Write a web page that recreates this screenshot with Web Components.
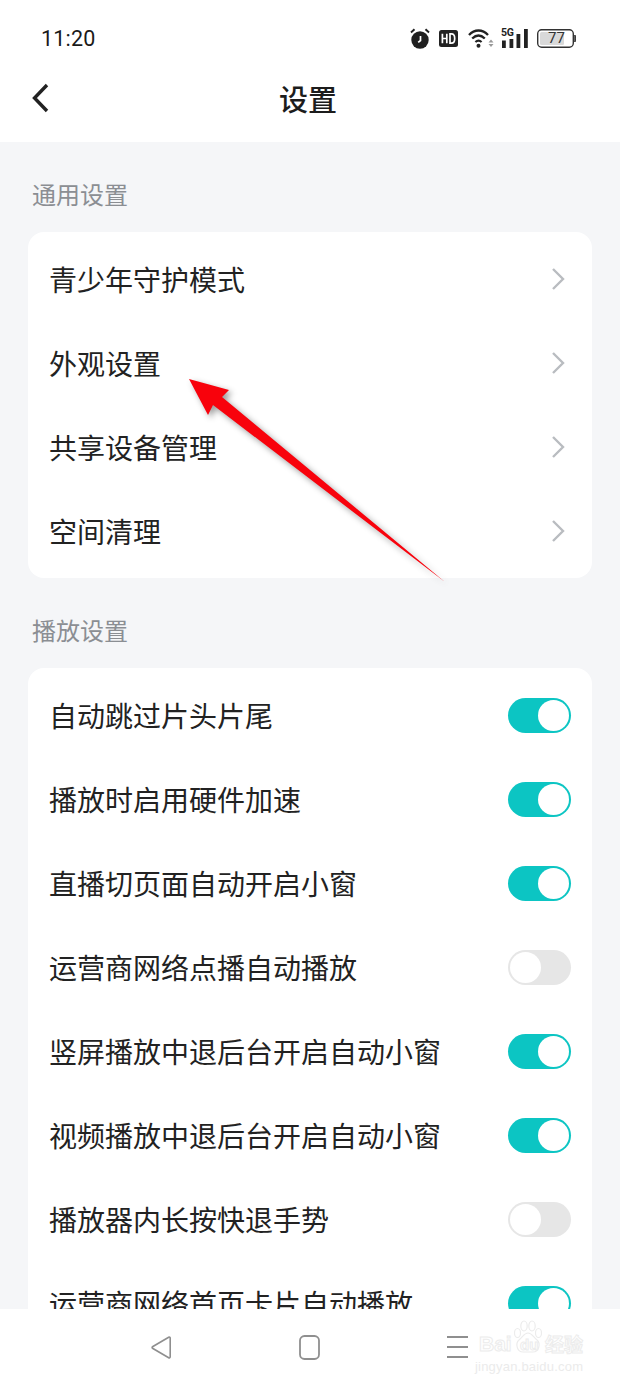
<!DOCTYPE html>
<html lang="zh">
<head>
<meta charset="utf-8">
<title>设置</title>
<style>
  html, body { margin: 0; padding: 0; }
  body {
    width: 620px;
    height: 1386px;
    overflow: hidden;
    background: #f5f6f8;
    color: #222;
    font-family: "Noto Sans CJK SC", "Noto Sans", sans-serif;
  }
</style>
</head>
<body>
<settings-screen>
  <status-bar slot="top"></status-bar>
  <title-bar slot="top">设置</title-bar>

  <setting-group label="通用设置">
    <setting-row>青少年守护模式</setting-row>
    <setting-row>外观设置</setting-row>
    <setting-row>共享设备管理</setting-row>
    <setting-row>空间清理</setting-row>
  </setting-group>

  <setting-group label="播放设置">
    <setting-row toggle="on">自动跳过片头片尾</setting-row>
    <setting-row toggle="on">播放时启用硬件加速</setting-row>
    <setting-row toggle="on">直播切页面自动开启小窗</setting-row>
    <setting-row toggle="off">运营商网络点播自动播放</setting-row>
    <setting-row toggle="on">竖屏播放中退后台开启自动小窗</setting-row>
    <setting-row toggle="on">视频播放中退后台开启自动小窗</setting-row>
    <setting-row toggle="off">播放器内长按快退手势</setting-row>
    <setting-row toggle="on">运营商网络首页卡片自动播放</setting-row>
  </setting-group>

  <nav-bar slot="bottom"></nav-bar>
  <callout-arrow slot="over"></callout-arrow>
  <baidu-mark slot="over"></baidu-mark>
</settings-screen>

<script>
class SettingsScreen extends HTMLElement {
  constructor() {
    super();
    this.attachShadow({ mode: 'open' });
    this.shadowRoot.innerHTML = `
      <style>
        :host { display: flex; flex-direction: column; position: relative; width: 620px; height: 1386px; overflow: hidden; }
        .top { background: #fff; flex: none; }
        .body { flex: 1; min-height: 0; overflow: hidden; padding: 0 28px; }
      </style>
      <div class="top"><slot name="top"></slot></div>
      <div class="body"><slot></slot></div>
      <slot name="bottom"></slot>
      <slot name="over"></slot>
    `;
  }
}

class StatusBar extends HTMLElement {
  constructor() {
    super();
    this.attachShadow({ mode: 'open' });
    this.shadowRoot.innerHTML = `
      <style>
        :host { display: flex; align-items: center; justify-content: space-between; height: 58px; padding: 18px 44px 0 41px; box-sizing: border-box; color: #1a1a1a; }
        .time { font: 400 21.500px/1 Roboto, "Liberation Sans", sans-serif; letter-spacing: .2px; position: relative; top: 1px; }
        .icons { display: flex; align-items: center; }
        svg { display: block; }
        .signal { position: relative; width: 27px; height: 19px; margin-left: 7px; }
        .signal span { position: absolute; left: 0; top: -1px; font: 700 10.500px/10px Roboto, sans-serif; letter-spacing: -.2px; color: #222; }
        .batt { position: relative; width: 39px; height: 19px; margin-left: 9px; }
        .batt b { position: absolute; left: 0; top: 0; width: 36px; height: 19px; font: 400 15px/19px Roboto, sans-serif; text-align: center; padding-left: 3px; box-sizing: border-box; color: #333; }
      </style>
      <span class="time">11:20</span>
      <div class="icons">
        <svg width="20" height="21" viewBox="0 0 20 21">
          <circle cx="10" cy="12" r="8.700" fill="#1f1f1f"/>
          <path d="M1 4.500 4.500 1.200M19 4.500 15.500 1.200" stroke="#1f1f1f" stroke-width="1.900" fill="none"/>
          <path d="M10.500 8v4.500l-2.300 1.800" stroke="#fff" stroke-width="1.700" fill="none"/>
        </svg>
        <svg style="margin-left:9px" width="19" height="17" viewBox="0 0 19 17">
          <rect width="19" height="17" rx="2.500" fill="#222"/>
          <path d="M3.400 3.800v9.400M7.800 3.800v9.400M3.400 8.500h4.400" stroke="#fff" stroke-width="1.700" fill="none"/>
          <path d="M11 3.800v9.400h1.400c2.300 0 3.300-1.900 3.300-4.700s-1-4.700-3.300-4.700z" stroke="#fff" stroke-width="1.700" fill="none"/>
        </svg>
        <svg style="margin-left:10px" width="26" height="20" viewBox="0 0 26 20">
          <path d="M1 7C6.500 1 14.500 1 20 7M4.200 10.500c4-3.900 8.600-3.900 12.600 0M7.400 14c2.100-1.800 4.100-1.800 6.200 0" stroke="#222" stroke-width="2.300" fill="none"/>
          <circle cx="10.500" cy="17.800" r="2" fill="#222"/>
          <path d="M23 11.500l2.500 3h-5zM20.500 16h5L23 19z" fill="#999"/>
        </svg>
        <div class="signal">
          <svg width="27" height="19" viewBox="0 0 27 19">
            <rect x="1" y="11.500" width="3.800" height="7.500" fill="#222"/>
            <rect x="8.500" y="10" width="3.800" height="9" fill="#222"/>
            <rect x="15.500" y="5" width="3.800" height="14" fill="#222"/>
            <rect x="23" y="0" width="3.800" height="19" fill="#222"/>
          </svg>
          <span>5G</span>
        </div>
        <div class="batt">
          <svg width="39" height="19" viewBox="0 0 39 19">
            <rect x=".7" y=".7" width="35.600" height="17.600" rx="4" fill="#fff" stroke="#333" stroke-width="1.400"/>
            <rect x="3" y="3" width="24" height="13" rx="1.500" fill="#d9d9d9"/>
            <path d="M37.800 6c1.200.4 1.200 6.600 0 7z" fill="#333" stroke="#333"/>
          </svg>
          <b>77</b>
        </div>
      </div>
    `;
  }
}

class TitleBar extends HTMLElement {
  constructor() {
    super();
    this.attachShadow({ mode: 'open' });
    this.shadowRoot.innerHTML = `
      <style>
        :host { display: flex; align-items: center; justify-content: center; position: relative; height: 84px; padding: 0 4px 4px 0; box-sizing: border-box; font-size: 29px; font-weight: 500; color: #1c1c1c; }
        svg { position: absolute; left: 31px; top: 24px; }
      </style>
      <svg width="18" height="32" viewBox="0 0 18 32"><path d="M16 3 3.500 16 16 29" fill="none" stroke="#222" stroke-width="3.400"/></svg>
      <slot></slot>
    `;
  }
}

class SettingGroup extends HTMLElement {
  constructor() {
    super();
    this.attachShadow({ mode: 'open' });
    this.shadowRoot.innerHTML = `
      <style>
        :host { display: block; }
        .label { height: 90px; box-sizing: border-box; padding: 34px 4px 0; font-size: 24px; line-height: 36px; color: #8b8e93; }
        .card { background: #fff; border-radius: 16px; padding: 6px 0 4px; }
      </style>
      <div class="label"></div>
      <div class="card"><slot></slot></div>
    `;
    this.shadowRoot.querySelector('.label').textContent = this.getAttribute('label');
  }
}

class SettingRow extends HTMLElement {
  constructor() {
    super();
    this.attachShadow({ mode: 'open' });
  }

  connectedCallback() {
    const toggle = this.getAttribute('toggle');
    let control = `<svg class="chevron" width="14" height="24" viewBox="0 0 14 24"><path d="M2 2l10 10L2 22" fill="none" stroke="#b9bcc0" stroke-width="2.400"/></svg>`;
    if (toggle) {
      control = `<span class="switch ${toggle}"><i></i></span>`;
    }
    this.shadowRoot.innerHTML = `
      <style>
        :host { display: flex; align-items: center; justify-content: space-between; height: 84px; padding: 0 21px 0 22px; font-size: 28px; color: #222; white-space: nowrap; }
        .text { position: relative; top: -1px; left: -1px; }
        .chevron { display: block; margin-right: 6px; margin-top: -2px; }
        .switch { display: flex; box-sizing: border-box; width: 63px; height: 35px; border-radius: 18px; padding: 2px; margin-top: -1px; }
        .switch i { display: block; width: 31px; height: 31px; border-radius: 50%; background: #fff; }
        .on { background: #0cc5c3; justify-content: flex-end; }
        .off { background: #e6e6e6; }
      </style>
      <span class="text"><slot></slot></span>
      ${control}
    `;
  }
}

class NavBar extends HTMLElement {
  constructor() {
    super();
    this.attachShadow({ mode: 'open' });
    this.shadowRoot.innerHTML = `
      <style>
        :host { display: block; flex: none; height: 77px; background: #fff; position: relative; z-index: 1; }
        .row { display: grid; grid-template-columns: 148px 148px 21px; align-items: center; height: 76px; padding-left: 151px; box-sizing: border-box; }
        svg { display: block; }
      </style>
      <div class="row">
        <svg width="20" height="23" viewBox="0 0 20 23"><path d="M19.200 2v19a1 1 0 0 1-1.500.8L1.500 12.300a1 1 0 0 1 0-1.600L17.700 1.200a1 1 0 0 1 1.500.8z" fill="none" stroke="#8f8f8f" stroke-width="1.600"/></svg>
        <svg width="21" height="25" viewBox="0 0 21 25"><rect x="1" y="1" width="19" height="23" rx="4.500" fill="none" stroke="#8f8f8f" stroke-width="1.800"/></svg>
        <svg width="21" height="24" viewBox="0 0 21 24"><path d="M0 2h21M0 12h21M0 22h21" stroke="#8f8f8f" stroke-width="1.800"/></svg>
      </div>
    `;
  }
}

class CalloutArrow extends HTMLElement {
  constructor() {
    super();
    this.attachShadow({ mode: 'open' });
    this.shadowRoot.innerHTML = `
      <style>
        :host { position: absolute; left: 180px; top: 370px; width: 280px; height: 225px; z-index: 2; pointer-events: none; }
        svg { display: block; overflow: visible; filter: drop-shadow(3px 3px 3px rgba(0,0,0,.4)); }
      </style>
      <svg width="280" height="225" viewBox="0 0 280 225">
        <path d="M9 9 49 20 42 27 265 212 33 35 28 45z" fill="#f8020c"/>
      </svg>
    `;
  }
}

class BaiduMark extends HTMLElement {
  constructor() {
    super();
    this.attachShadow({ mode: 'open' });
    this.shadowRoot.innerHTML = `
      <style>
        :host { position: absolute; left: 474px; top: 1320px; width: 114px; height: 56px; z-index: 3; pointer-events: none; }
        span { position: absolute; color: #fff; -webkit-text-stroke: 1px #ececec; white-space: nowrap; }
        .bai { left: 5px; top: 12px; font: 700 21px/24px "Liberation Sans", sans-serif; }
        .du { left: 46px; top: 16px; font: 700 15px/18px "Liberation Sans", sans-serif; }
        .jing { left: 71px; top: 12px; font: 700 19px/24px "Noto Sans CJK SC", sans-serif; }
        .url { left: 1px; top: 39px; font: 400 13px/16px "Liberation Sans", sans-serif; color: #ebebeb; -webkit-text-stroke: 0; letter-spacing: .2px; }
        svg { position: absolute; left: 39px; top: 0; }
      </style>
      <svg width="30" height="33" viewBox="0 0 30 33" fill="#fff" stroke="#ececec" stroke-width="1.200">
        <ellipse cx="4.500" cy="13" rx="3" ry="4.500"/>
        <ellipse cx="11" cy="6" rx="3.200" ry="5"/>
        <ellipse cx="19" cy="6" rx="3.200" ry="5"/>
        <ellipse cx="25.500" cy="13" rx="3" ry="4.500"/>
        <path d="M15 13c4 0 5 4 9 7 4 3.500 2 12-4 12H10C4 32 2 23.500 6 20c4-3 5-7 9-7z"/>
      </svg>
      <span class="bai">Bai</span>
      <span class="du">du</span>
      <span class="jing">经验</span>
      <span class="url">jingyan.baidu.com</span>
    `;
  }
}

customElements.define('settings-screen', SettingsScreen);
customElements.define('status-bar', StatusBar);
customElements.define('title-bar', TitleBar);
customElements.define('setting-group', SettingGroup);
customElements.define('setting-row', SettingRow);
customElements.define('nav-bar', NavBar);
customElements.define('callout-arrow', CalloutArrow);
customElements.define('baidu-mark', BaiduMark);
</script>
</body>
</html>
